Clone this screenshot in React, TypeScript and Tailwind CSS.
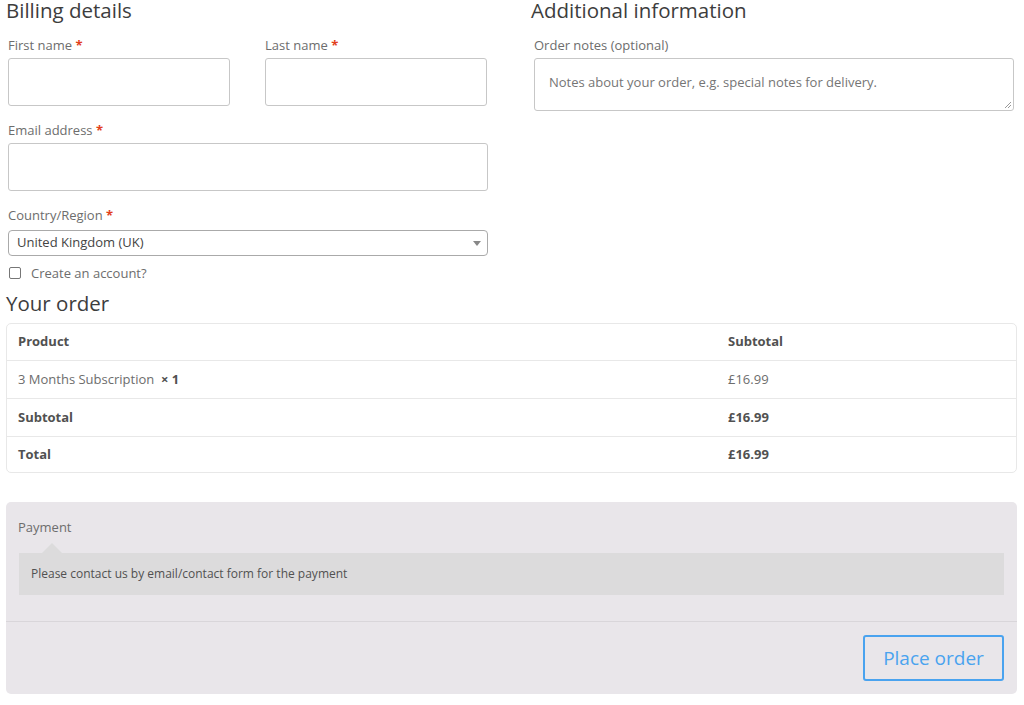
import React from "react";

const font = { fontFamily: '"Open Sans", "Noto Sans", sans-serif' };

function Label({ text, required = true }: { text: string; required?: boolean }) {
  return (
    <label className="block text-[13px] leading-[20px] text-[#6d6d6d]">
      {text}
      {required && <span className="text-[#e2401c] font-bold"> *</span>}
    </label>
  );
}

export default function App() {
  return (
    <div className="w-[1024px] h-[705px] bg-white overflow-hidden" style={font}>
      <div className="px-[6px]">
        <div className="flex">
          {/* Billing */}
          <div className="w-[484px] pl-[2px]">
            <h3 className="text-[20.5px] leading-[20px] text-[#3d3d3d] -ml-[2px]">Billing details</h3>
            <div className="flex gap-[35px] mt-[15px]">
              <div className="w-[222px]">
                <Label text="First name" />
                <div className="mt-[3px] h-[48px] border border-[#c7c7c7] rounded-[3px] bg-white" />
              </div>
              <div className="w-[222px]">
                <Label text="Last name" />
                <div className="mt-[3px] h-[48px] border border-[#c7c7c7] rounded-[3px] bg-white" />
              </div>
            </div>
            <div className="mt-[14px]">
              <Label text="Email address" />
              <div className="mt-[3px] w-[480px] h-[48px] border border-[#c7c7c7] rounded-[3px] bg-white" />
            </div>
            <div className="mt-[14px]">
              <Label text="Country/Region" />
              <div className="mt-[5px] w-[480px] h-[26px] border border-[#aaaaaa] rounded-[4px] bg-white flex items-center justify-between pl-[8px] pr-[6px]">
                <span className="text-[13px] text-[#444]">United Kingdom (UK)</span>
                <svg width="8" height="5" viewBox="0 0 8 5">
                  <path d="M0 0 L8 0 L4 5 Z" fill="#888" />
                </svg>
              </div>
            </div>
            <div className="mt-[9px] flex items-center">
              <span className="w-[12px] h-[12px] border border-[#767676] rounded-[2px] bg-white ml-[1px]" />
              <span className="ml-[10px] text-[13px] leading-[16px] text-[#6d6d6d]">Create an account?</span>
            </div>
          </div>
          {/* Additional */}
          <div className="ml-[41px] w-[483px]">
            <h3 className="text-[20.5px] leading-[20px] text-[#3d3d3d]">Additional information</h3>
            <div className="mt-[15px] pl-[3px]">
              <Label text="Order notes (optional)" required={false} />
              <div className="relative mt-[3px] h-[53px] border border-[#c7c7c7] rounded-[3px] bg-white px-[14px] pt-[10px]">
                <span className="text-[13px] leading-[20px] text-[#757575]">Notes about your order, e.g. special notes for delivery.</span>
                <svg className="absolute right-[1px] bottom-[1px]" width="9" height="9" viewBox="0 0 9 9">
                  <path d="M8 2 L2 8 M8 5 L5 8" stroke="#999" strokeWidth="1" />
                </svg>
              </div>
            </div>
          </div>
        </div>

        <h3 className="mt-[9px] text-[20.5px] leading-[26px] text-[#3d3d3d]">Your order</h3>

        <div className="mt-[7px] w-[1011px] border border-[#e8e8e8] rounded-[5px] text-[13px] text-[#6d6d6d]">
          <div className="flex h-[37px] items-center border-b border-[#e8e8e8] font-bold text-[#515151]">
            <div className="w-[710px] pl-[11px]">Product</div>
            <div className="pl-[11px]">Subtotal</div>
          </div>
          <div className="flex h-[38px] items-center border-b border-[#e8e8e8]">
            <div className="w-[710px] pl-[11px]">
              3 Months Subscription&nbsp; <strong className="text-[#515151]">× 1</strong>
            </div>
            <div className="pl-[11px]">£16.99</div>
          </div>
          <div className="flex h-[38px] items-center border-b border-[#e8e8e8] font-bold text-[#515151]">
            <div className="w-[710px] pl-[11px]">Subtotal</div>
            <div className="pl-[11px]">£16.99</div>
          </div>
          <div className="flex h-[35px] items-center font-bold text-[#515151]">
            <div className="w-[710px] pl-[11px]">Total</div>
            <div className="pl-[11px]">£16.99</div>
          </div>
        </div>

        <div className="mt-[29px] w-[1011px] h-[192px] bg-[#e9e6ea] rounded-[5px]">
          <div className="pl-[13px] pr-[13px] pt-[16px] pb-[26px] border-b border-[#d9d6da]">
            <div className="text-[13px] leading-[18px] text-[#6d6d6d] -ml-[1px]">Payment</div>
            <div className="relative mt-[17px] h-[42px] bg-[#dcdbdc] flex items-center pl-[12px] text-[12px] text-[#515151]">
              <span className="absolute -top-[10px] left-[23px] w-0 h-0 border-l-[10px] border-r-[10px] border-b-[10px] border-l-transparent border-r-transparent border-b-[#dcdbdc]" />
              Please contact us by email/contact form for the payment
            </div>
          </div>
          <div className="flex justify-end px-[13px] pt-[13px]">
            <button className="w-[141px] h-[46px] border-2 border-[#4aa3ef] rounded-[3px] text-[19px] text-[#4aa3ef] bg-transparent">
              Place order
            </button>
          </div>
        </div>
      </div>
    </div>
  );
}
